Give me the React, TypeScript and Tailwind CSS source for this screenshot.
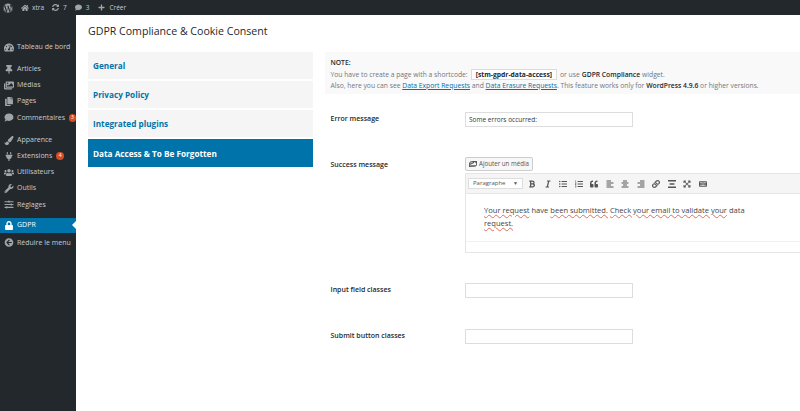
import React from "react";
import {
  FaWordpress, FaHome, FaSyncAlt, FaComment, FaPlus, FaTachometerAlt, FaThumbtack, FaImages, FaCopy,
  FaPaintBrush, FaPlug, FaUsers, FaWrench, FaSlidersH, FaLock, FaArrowCircleLeft, FaBold, FaItalic,
  FaListUl, FaListOl, FaQuoteLeft, FaAlignLeft, FaAlignCenter, FaAlignRight, FaLink, FaExpandArrowsAlt, FaKeyboard,
} from "react-icons/fa";

const font = "font-['Open_Sans',sans-serif]";

const MenuItem = ({ icon: Icon, label, badge, active }: any) => (
  <div className={`relative flex items-center gap-[3px] whitespace-nowrap pl-[4px] text-[7px] ${active ? "h-[15px] bg-[#0073aa] text-white" : "h-[16.2px] text-[#c8ccd0]"}`}>
    <Icon className={`h-[9px] w-[10px] shrink-0 ${active ? "text-white" : "text-[#a0a5aa]"}`} />
    <span>{label}</span>
    {badge && (
      <span className="ml-px flex h-[8px] w-[8px] items-center justify-center rounded-full bg-[#d54e21] text-[5px] text-white">{badge}</span>
    )}
    {active && <span className="absolute right-0 top-[3.5px] h-0 w-0 border-y-[4px] border-r-[4px] border-y-transparent border-r-white" />}
  </div>
);

const Tab = ({ label, active }: { label: string; active?: boolean }) => (
  <div className={`flex items-center pl-[5px] pt-[2px] text-[8.2px] font-bold ${active ? "h-[28px] bg-[#0073aa] text-white" : "h-[27px] bg-[#f5f5f5] text-[#0073aa]"}`}>
    {label}
  </div>
);

const Row = ({ label, children, className }: any) => (
  <div className={`flex items-center ${className}`}>
    <div className="w-[140px] pl-[5.5px] text-[7px] font-semibold text-[#23282d]">{label}</div>
    {children}
  </div>
);

const TextBox = ({ value }: { value?: string }) => (
  <div className="flex h-[15px] w-[168px] items-center border border-[#ddd] bg-white pl-[3px] text-[6.5px] text-[#32373c]">{value}</div>
);

const Wavy = ({ children }: { children: string }) => (
  <span className="underline decoration-[#e0705a] decoration-wavy decoration-[0.5px] underline-offset-1">{children}</span>
);

const toolIcons = [FaBold, FaItalic, FaListUl, FaListOl, FaQuoteLeft, FaAlignLeft, FaAlignCenter, FaAlignRight, FaLink];

export default function App() {
  return (
    <div className={`flex h-[411px] w-[800px] flex-col overflow-hidden bg-white ${font}`}>
      <div className="flex h-[15px] shrink-0 items-center bg-[#23282d] text-[6.5px] text-[#c8ccd0]">
        <FaWordpress className="ml-[3px] h-[10px] w-[10px] text-[#a0a5aa]" />
        <FaHome className="ml-[8px] h-[8px] w-[8px] text-[#a0a5aa]" />
        <span className="ml-[3px]">xtra</span>
        <FaSyncAlt className="ml-[8px] h-[7px] w-[7px] text-[#a0a5aa]" />
        <span className="ml-[4px]">7</span>
        <FaComment className="ml-[8px] h-[7px] w-[7px] text-[#a0a5aa]" />
        <span className="ml-[4px]">3</span>
        <FaPlus className="ml-[9px] h-[7px] w-[7px] text-[#a0a5aa]" />
        <span className="ml-[4px]">Créer</span>
      </div>
      <div className="flex min-h-0 flex-1">
        <aside className="w-[76px] shrink-0 bg-[#23282d] pt-[24px]">
          <MenuItem icon={FaTachometerAlt} label="Tableau de bord" />
          <div className="h-[6px]" />
          <MenuItem icon={FaThumbtack} label="Articles" />
          <MenuItem icon={FaImages} label="Médias" />
          <MenuItem icon={FaCopy} label="Pages" />
          <MenuItem icon={FaComment} label="Commentaires" badge="3" />
          <div className="h-[6px]" />
          <MenuItem icon={FaPaintBrush} label="Apparence" />
          <MenuItem icon={FaPlug} label="Extensions" badge="4" />
          <MenuItem icon={FaUsers} label="Utilisateurs" />
          <MenuItem icon={FaWrench} label="Outils" />
          <MenuItem icon={FaSlidersH} label="Réglages" />
          <div className="h-[5px]" />
          <MenuItem icon={FaLock} label="GDPR" active />
          <div className="h-[2px]" />
          <MenuItem icon={FaArrowCircleLeft} label="Réduire le menu" />
        </aside>
        <main className="min-w-0 flex-1 pl-[12px]">
          <h1 className="mt-[7px] h-[20px] text-[10.6px] leading-[18px] text-[#23282d]">GDPR Compliance &amp; Cookie Consent</h1>
          <div className="mt-[10px] flex">
            <nav className="flex w-[225px] shrink-0 flex-col gap-[2px]">
              <Tab label="General" />
              <Tab label="Privacy Policy" />
              <Tab label="Integrated plugins" />
              <Tab label="Data Access & To Be Forgotten" active />
            </nav>
            <section className="ml-[12px] min-w-0 flex-1">
              <div className="h-[42px] bg-[#f9f9f9] pl-[5.5px] pt-[5px] text-[6.75px] leading-[11px] text-[#72777c]">
                <div className="font-semibold text-[#23282d]">NOTE:</div>
                <div className="mt-px flex h-[11px] items-center whitespace-nowrap">
                  You have to create a page with a shortcode:
                  <span className="mx-[3px] border border-[#ddd] bg-white px-[4px] font-bold leading-[9px] text-[#23282d]">[stm-gpdr-data-access]</span>
                  or use <b className="mx-[2px] font-semibold text-[#23282d]">GDPR Compliance</b> widget.
                </div>
                <div className="whitespace-nowrap">
                  Also, here you can see <span className="text-[#0073aa] underline">Data Export Requests</span> and{" "}
                  <span className="text-[#0073aa] underline">Data Erasure Requests</span>. This feature works only for{" "}
                  <b className="font-semibold text-[#23282d]">WordPress 4.9.6</b> or higher versions.
                </div>
              </div>
              <Row className="mt-[18px] h-[15px]" label="Error message">
                <TextBox value="Some errors occurred:" />
              </Row>
              <div className="mt-[30px] flex">
                <div className="w-[140px] pt-[3px] pl-[5.5px] text-[7px] font-semibold text-[#23282d]">Success message</div>
                <div className="min-w-0 flex-1">
                  <div className="flex h-[14px] w-[68px] items-center justify-center gap-[2px] whitespace-nowrap rounded-[2px] border border-[#ccc] bg-[#f7f7f7] text-[6.2px] text-[#555]">
                    <FaImages className="h-[8px] w-[8px]" />
                    Ajouter un média
                  </div>
                  <div className="mt-[2px] h-[80px] border-b border-l border-t border-[#e5e5e5]">
                    <div className="flex h-[20px] items-center border-b border-[#e5e5e5] bg-[#f5f5f5] pl-[2px]">
                      <div className="flex h-[11px] w-[55px] items-center justify-between border border-[#ddd] bg-white px-[4px] text-[6px] text-[#555]">
                        Paragraphe <span className="text-[5px]">▼</span>
                      </div>
                      <div className="ml-[5px] flex items-center gap-[7.5px] text-[#555]">
                        {toolIcons.map((Icon, i) => (
                          <Icon key={i} className="h-[8px] w-[8px]" />
                        ))}
                        <svg viewBox="0 0 10 10" className="h-[8px] w-[8px]" fill="currentColor">
                          <path d="M0 0h10v2H0zM0 8h10v2H0zM2 4h6v2H2z" />
                        </svg>
                        <FaExpandArrowsAlt className="h-[8px] w-[8px]" />
                        <FaKeyboard className="h-[8px] w-[8px]" />
                      </div>
                    </div>
                    <div className="h-[48px] border-b border-[#f0f0f0] pl-[18px] pt-[10px] text-[7.55px] leading-[13px] text-[#444]">
                      <div className="w-[265px]">
                        <Wavy>Your request</Wavy> have <Wavy>been submitted.</Wavy> <Wavy>Check your email to validate your</Wavy> data <Wavy>request.</Wavy>
                      </div>
                    </div>
                  </div>
                </div>
              </div>
              <Row className="mt-[30px] h-[15px]" label="Input field classes">
                <TextBox />
              </Row>
              <Row className="mt-[31px] h-[15px]" label="Submit button classes">
                <TextBox />
              </Row>
            </section>
          </div>
        </main>
      </div>
    </div>
  );
}
